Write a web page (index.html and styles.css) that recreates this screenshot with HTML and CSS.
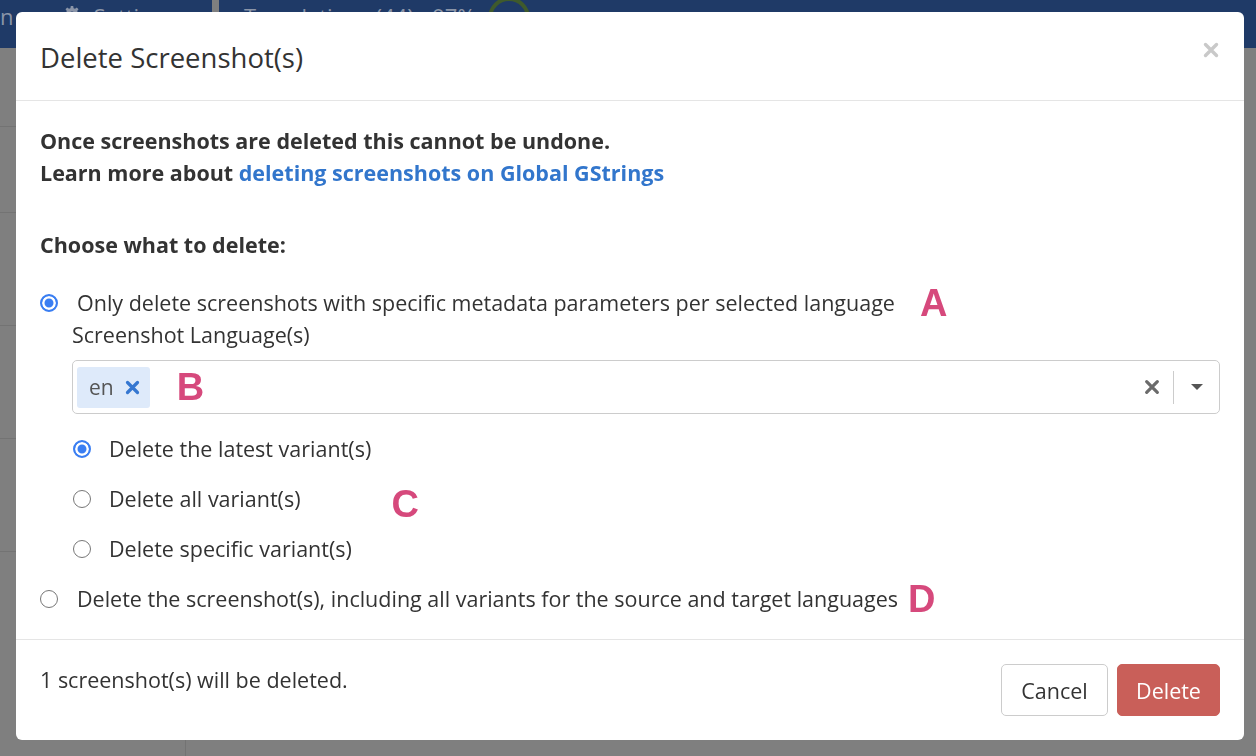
FILE: index.html
```html
<!DOCTYPE html>
<html lang="en">
<head>
<meta charset="utf-8">
<title>Delete Screenshot(s)</title>
<link rel="stylesheet" href="styles.css">
</head>
<body>
<div class="page">
  <div class="topbar">
    <span class="tb-item tb-cut">n</span>
    <span class="tb-item tb-settings">
      <svg class="gear" viewBox="0 0 16 16" width="16" height="16"><path fill="#8b95a8" d="M6.8 0h2.4l.4 2.2 1.4.6 1.8-1.3 1.7 1.7-1.3 1.8.6 1.4 2.2.4v2.4l-2.2.4-.6 1.4 1.3 1.8-1.7 1.7-1.8-1.3-1.4.6-.4 2.2H6.8l-.4-2.2-1.4-.6-1.8 1.3-1.7-1.7 1.3-1.8-.6-1.4L0 9.2V6.8l2.2-.4.6-1.4-1.3-1.8 1.7-1.7 1.8 1.3 1.4-.6z"/><circle cx="8" cy="8" r="2.5" fill="#1f3a67"/></svg>
      Settings
    </span>
    <span class="tb-divider"></span>
    <span class="tb-item tb-trans">Translations (44) - 97%</span>
    <span class="tb-ring"></span>
  </div>
  <div class="backdrop">
    <div class="bg-col bg-left">
      <div class="bg-row bg-row-first"></div><div class="bg-row"></div><div class="bg-row"></div><div class="bg-row"></div><div class="bg-row"></div>
    </div>
  </div>
</div>

<div class="modal">
  <div class="modal-header">
    <h4 class="modal-title">Delete Screenshot(s)</h4>
    <button class="close" aria-label="Close">
      <svg viewBox="0 0 16 16" width="16" height="16"><path d="M2.5 2.5l11 11M13.5 2.5l-11 11" stroke="#c9c9c9" stroke-width="3.4" stroke-linecap="round"/></svg>
    </button>
  </div>

  <div class="modal-body">
    <p class="warning">Once screenshots are deleted this cannot be undone.<br>Learn more about <a href="#" class="link">deleting screenshots on Global GStrings</a></p>

    <p class="choose">Choose what to delete:</p>

    <div class="option">
      <span class="radio checked"></span>
      <span class="option-label">Only delete screenshots with specific metadata parameters per selected language</span>
      <span class="marker marker-a">A</span>
    </div>

    <div class="nested">
      <div class="field-label">Screenshot Language(s)</div>
      <div class="select">
        <div class="select-values">
          <span class="tag">en <svg class="tag-x" viewBox="0 0 12 12" width="15" height="15"><path d="M2 2l8 8M10 2l-8 8" stroke="#3577d1" stroke-width="2.6" stroke-linecap="round"/></svg></span>
          <span class="marker marker-b">B</span>
        </div>
        <div class="select-controls">
          <svg class="clear" viewBox="0 0 12 12" width="16" height="16"><path d="M2 2l8 8M10 2l-8 8" stroke="#6b6b6b" stroke-width="2.4" stroke-linecap="round"/></svg>
          <span class="sep"></span>
          <span class="caret"></span>
        </div>
      </div>

      <div class="sub-options">
        <div class="option">
          <span class="radio checked"></span>
          <span class="option-label sub">Delete the latest variant(s)</span>
        </div>
        <div class="option">
          <span class="radio"></span>
          <span class="option-label sub">Delete all variant(s)</span>
          <span class="marker marker-c">C</span>
        </div>
        <div class="option">
          <span class="radio"></span>
          <span class="option-label sub">Delete specific variant(s)</span>
        </div>
      </div>
    </div>

    <div class="option">
      <span class="radio"></span>
      <span class="option-label">Delete the screenshot(s), including all variants for the source and target languages</span>
      <span class="marker marker-d">D</span>
    </div>
  </div>

  <div class="modal-footer">
    <span class="count">1 screenshot(s) will be deleted.</span>
    <div class="actions">
      <button class="btn btn-default">Cancel</button>
      <button class="btn btn-danger">Delete</button>
    </div>
  </div>
</div>
</body>
</html>
```

FILE: styles.css
```css
* { box-sizing: border-box; }

html, body {
  margin: 0;
  padding: 0;
  height: 100%;
  background: #7b7c7b;
  font-family: "Open Sans", "Liberation Sans", sans-serif;
  color: #333;
  overflow: hidden;
}

.page {
  width: 1256px;
  height: 756px;
  display: flex;
  flex-direction: column;
}

.topbar {
  height: 48px;
  background: #1f3a67;
  display: flex;
  align-items: flex-start;
  color: #8b95a8;
  font-size: 22px;
  line-height: 26px;
  padding-top: 3px;
  flex-shrink: 0;
}

.tb-item { white-space: nowrap; }
.tb-cut { margin-left: 0; }
.tb-settings {
  margin-left: 50px;
  display: flex;
  align-items: center;
  gap: 14px;
}
.gear { margin-top: -4px; }
.tb-divider {
  width: 7px;
  height: 48px;
  margin-top: -3px;
  background: #7f7f7f;
  margin-left: 37px;
}
.tb-trans { margin-left: 25px; }
.tb-ring {
  width: 42px;
  height: 42px;
  border: 4px solid #3f5a2c;
  border-radius: 50%;
  margin-left: 13px;
  margin-top: -6px;
}

.backdrop {
  flex: 1;
  background: #7f7f7f;
  display: flex;
}

.bg-col {
  width: 186px;
  border-right: 1px solid #737373;
  padding-top: 78px;
}
.bg-row {
  height: 113px;
  border-top: 1px solid #737373;
}
.bg-row-first { height: 86px; }

/* Modal */
.modal {
  position: fixed;
  top: 12px;
  left: 16px;
  width: 1228px;
  height: 728px;
  background: #fff;
  border-radius: 6px;
  display: flex;
  flex-direction: column;
}

.modal-header {
  height: 89px;
  border-bottom: 1px solid #e5e5e5;
  display: flex;
  align-items: center;
  justify-content: space-between;
  padding: 0 24px;
  flex-shrink: 0;
}

.modal-title {
  margin: 0;
  font-size: 27.5px;
  font-weight: 400;
  color: #333;
  line-height: 34px;
  margin-top: 4px;
}

.close {
  border: 0;
  background: none;
  padding: 0;
  width: 16px;
  height: 16px;
  margin-right: 1px;
  align-self: flex-start;
  margin-top: 30px;
  cursor: pointer;
}
.close svg { display: block; }

.modal-body {
  flex: 1;
  padding: 24px 24px 0 24px;
  font-size: 21.5px;
  line-height: 32px;
}

.warning {
  margin: 0;
  font-weight: 700;
}
.link {
  color: #3276cc;
  text-decoration: none;
}

.choose {
  margin: 40px 0 26px 0;
  font-weight: 700;
}

.option {
  display: flex;
  align-items: center;
  height: 32px;
}

.radio {
  width: 18px;
  height: 18px;
  border-radius: 50%;
  border: 1.5px solid #767676;
  background: #fff;
  flex-shrink: 0;
  margin-right: 19px;
}
.radio.checked {
  border: 2px solid #3a7ef2;
  background: #3a7ef2;
  box-shadow: inset 0 0 0 2.5px #fff;
}

.option-label { white-space: nowrap; }

.marker {
  font-family: "Liberation Sans", Arial, sans-serif;
  font-weight: 700;
  font-size: 38px;
  line-height: 32px;
  color: #d6497c;
}
.marker-a { margin-left: 25px; }
.marker-b { margin-left: 27px; }
.marker-c { margin-left: 91px; margin-top: 10px; }
.marker-d { margin-left: 10px; }

.nested {
  padding-left: 32px;
  margin-bottom: 18px;
}

.field-label { line-height: 32px; }

.select {
  margin-top: 9px;
  height: 54px;
  border: 1px solid #ccc;
  border-radius: 5px;
  display: flex;
  align-items: center;
  justify-content: space-between;
  padding: 0 16px 0 4px;
}

.select-values {
  display: flex;
  align-items: center;
}

.tag {
  height: 41px;
  background: #deeafa;
  border-radius: 3px;
  display: flex;
  align-items: center;
  padding: 0 10px 0 12px;
  font-size: 21px;
  color: #555;
  gap: 11px;
}
.tag-x { display: block; }

.select-controls {
  display: flex;
  align-items: center;
}
.clear { display: block; }
.sep {
  width: 1px;
  height: 33px;
  background: #ccc;
  margin: 0 17px 0 13px;
}
.caret {
  width: 0;
  height: 0;
  border-left: 6px solid transparent;
  border-right: 6px solid transparent;
  border-top: 6px solid #555;
}

.sub-options {
  margin-top: 19px;
  display: flex;
  flex-direction: column;
  gap: 18px;
}
.sub-options .radio { margin-left: 1px; margin-right: 18px; }

/* Footer */
.modal-footer {
  height: 101px;
  border-top: 1px solid #e5e5e5;
  padding: 24px;
  display: flex;
  justify-content: space-between;
  align-items: flex-start;
  flex-shrink: 0;
}
.count {
  font-size: 21.5px;
  line-height: 32px;
}
.actions {
  display: flex;
  gap: 9px;
}
.btn {
  height: 52px;
  font-family: "Open Sans", "Liberation Sans", sans-serif;
  font-size: 21.5px;
  border-radius: 5px;
  padding: 0;
  cursor: pointer;
}
.btn-default {
  background: #fff;
  border: 1px solid #ccc;
  color: #333;
  width: 107px;
}
.btn-danger {
  background: #c95f59;
  border: 1px solid #c95f59;
  color: #fff;
  width: 103px;
}
```
